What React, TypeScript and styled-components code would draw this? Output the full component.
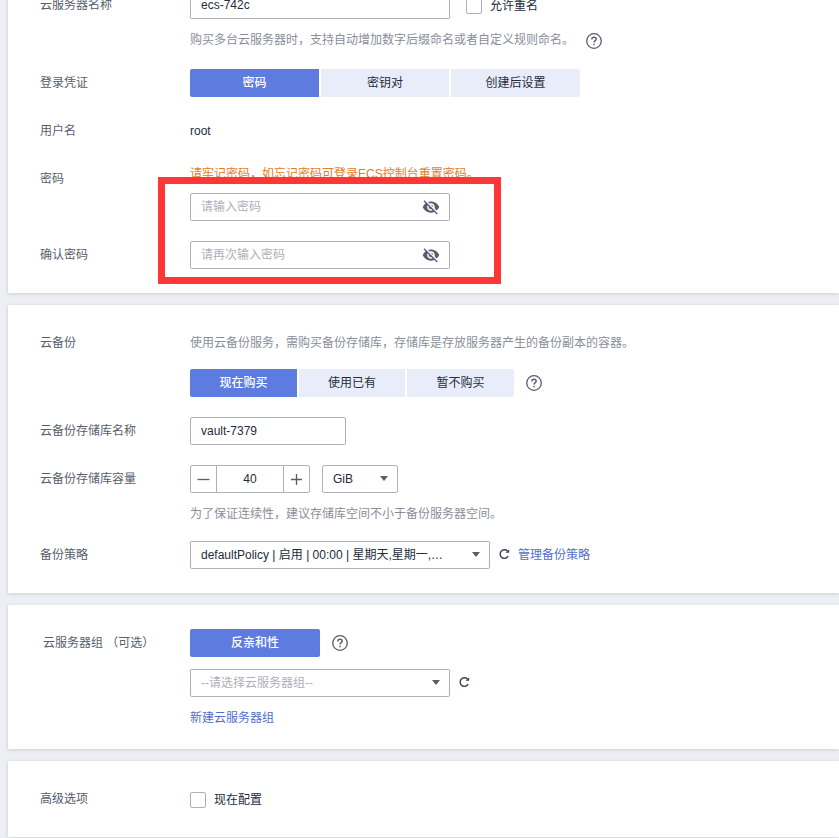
import React from 'react';
import styled, { createGlobalStyle } from 'styled-components';
import { MdVisibilityOff } from 'react-icons/md';

const color = {
  text: '#252b3a',
  label: '#575d6c',
  hint: '#8a8e99',
  line: '#adb0b8',
  primary: '#5e7ce0',
  link: '#526ecc',
  soft: '#e9edfa',
  warning: '#e37d29',
};

const GlobalStyle = createGlobalStyle`
  * { box-sizing: border-box; }
  body {
    margin: 0;
    background: #eeeff4;
    color: ${color.text};
    font: 12px/16px "Liberation Sans", "Noto Sans CJK SC", sans-serif;
  }
  input { font: inherit; color: inherit; }
`;

const Page = styled.main`
  position: relative;
  height: 838px;
  overflow: hidden;
  padding-left: 8px;
  display: flex;
  flex-direction: column;
  gap: 12px;
`;

const Card = styled.section<{ $scrolled?: boolean }>`
  flex: none;
  margin-top: ${p => (p.$scrolled ? '-33px' : '0')};
  padding: 24px 0 24px 32px;
  background: #fff;
  box-shadow: 0 1px 4px rgba(0, 0, 0, 0.14);
  display: flex;
  flex-direction: column;
  gap: 20px;
`;

const Row = styled.div`
  display: grid;
  grid-template-columns: 150px 1fr;
`;

const Label = styled.div<{ $indent?: number }>`
  padding-left: ${p => p.$indent ?? 0}px;
  line-height: 28px;
  color: ${color.label};
  white-space: pre;
`;

const Field = styled.div`
  min-width: 0;
`;

const Line = styled.div<{ $top?: number }>`
  display: flex;
  align-items: center;
  min-height: 28px;
  margin-top: ${p => p.$top ?? 0}px;
`;

const HelpLine = styled.div<{ $tall?: boolean }>`
  display: flex;
  align-items: ${p => (p.$tall ? 'flex-end' : 'center')};
  gap: 12px;
  height: ${p => (p.$tall ? 18 : 16)}px;
  margin: ${p => (p.$tall ? '12px 0 0' : '13px 0 -1px')};
  color: ${color.hint};
`;

const Hint = styled.span`
  color: ${color.hint};
`;

const Warning = styled.div`
  height: 18px;
  margin-bottom: 10px;
  line-height: 18px;
  color: ${color.warning};
`;

const Box = styled.div<{ $width: number }>`
  width: ${p => p.$width}px;
  height: 28px;
  padding: 0 10px;
  border: 1px solid ${color.line};
  border-radius: 2px;
  background: #fff;
  display: flex;
  align-items: center;
  justify-content: space-between;
`;

const Input = styled.input`
  flex: 1;
  min-width: 0;
  padding: 0;
  border: 0;
  outline: 0;
  background: transparent;
  &::placeholder { color: ${color.line}; opacity: 1; }
`;

const EyeOff = styled(MdVisibilityOff)`
  flex: none;
  width: 18px;
  height: 18px;
  margin-right: -1px;
  color: ${color.label};
`;

const Value = styled.span<{ $muted?: boolean }>`
  color: ${p => (p.$muted ? color.line : color.text)};
  white-space: nowrap;
`;

const Caret = styled.i`
  flex: none;
  margin: 0 -1px 1px 0;
  border: 4.5px solid transparent;
  border-top: 5.5px solid ${color.label};
  border-bottom: 0;
`;

const Segments = styled.div<{ $columns: string }>`
  display: grid;
  grid-template-columns: ${p => p.$columns};
  gap: 2px;
  height: 28px;
  border-radius: 2px;
  overflow: hidden;
`;

const Segment = styled.button<{ $active?: boolean }>`
  padding: 0;
  border: 0;
  font: inherit;
  font-weight: ${p => (p.$active ? 500 : 400)};
  color: ${p => (p.$active ? '#fff' : color.text)};
  background: ${p => (p.$active ? color.primary : color.soft)};
`;

const Stepper = styled.div`
  width: 120px;
  height: 28px;
  margin-right: 12px;
  border: 1px solid ${color.line};
  border-radius: 2px;
  display: grid;
  grid-template-columns: 25px 1fr 25px;
`;

const StepButton = styled.button`
  display: grid;
  place-items: center;
  padding: 0;
  border: 0;
  background: transparent;
  color: ${color.label};
`;

const StepValue = styled.div`
  border: solid ${color.line};
  border-width: 0 1px;
  line-height: 26px;
  text-align: center;
`;

const Check = styled.label<{ $left?: number }>`
  display: flex;
  align-items: center;
  gap: 8px;
  margin-left: ${p => p.$left ?? 0}px;
`;

const CheckText = styled.span`
  padding-top: 2px;
`;

const Tick = styled.input.attrs({ type: 'checkbox' })`
  appearance: none;
  width: 16px;
  height: 16px;
  margin: 2px 0 0;
  border: 1px solid ${color.line};
  border-radius: 2px;
  background: #fff;
`;

const Link = styled.a`
  color: ${color.link};
`;

const HelpSvg = styled.svg<{ $left?: number }>`
  flex: none;
  margin-left: ${p => p.$left ?? 0}px;
  color: ${color.label};
`;

const ReloadSvg = styled.svg`
  flex: none;
  margin: 0 8px 2px 9px;
  color: #3c4252;
`;

const Highlight = styled.div`
  position: absolute;
  left: 158px;
  top: 177px;
  width: 343px;
  height: 107px;
  border: 7px solid #fc3736;
  pointer-events: none;
`;

const HelpText = styled.span`
  line-height: 18px;
`;

const Help = ({ left }: { left?: number }) => (
  <HelpSvg $left={left} width="16" height="16" viewBox="0 0 16 16" fill="none" stroke="currentColor">
    <circle cx="8" cy="8" r="7.3" strokeWidth="1.3" />
    <path d="M5.8 6.4C5.8 5 6.8 4.3 8 4.3s2.2.7 2.2 1.9C10.2 7.6 8 7.7 8 9.6" strokeWidth="1.4" />
    <path d="M8 10.8v1.5" strokeWidth="1.5" />
  </HelpSvg>
);

const Reload = () => (
  <ReloadSvg width="11" height="12" viewBox="0 0 11 12" fill="none">
    <path d="M9.2 8.2A4.3 4.3 0 1 1 8.5 3" stroke="currentColor" strokeWidth="1.4" />
    <path d="M10.2 1.2v3.6H6.6z" fill="currentColor" />
  </ReloadSvg>
);

const Password = ({ placeholder }: { placeholder: string }) => (
  <Box $width={260}>
    <Input type="password" placeholder={placeholder} />
    <EyeOff />
  </Box>
);

const Select = ({ width, value, muted }: { width: number; value: string; muted?: boolean }) => (
  <Box $width={width}>
    <Value $muted={muted}>{value}</Value>
    <Caret />
  </Box>
);

const Choices = ({ items, columns }: { items: string[]; columns: string }) => (
  <Segments $columns={columns}>
    {items.map((item, i) => (
      <Segment key={item} $active={i === 0}>{item}</Segment>
    ))}
  </Segments>
);

export default function App() {
  return (
    <>
      <GlobalStyle />
      <Page>
        <Card $scrolled>
          <Row>
            <Label>云服务器名称</Label>
            <Field>
              <Line>
                <Box $width={260}><Input defaultValue="ecs-742c" /></Box>
                <Check $left={16}><Tick /><CheckText>允许重名</CheckText></Check>
              </Line>
              <HelpLine $tall>
                <HelpText>购买多台云服务器时，支持自动增加数字后缀命名或者自定义规则命名。</HelpText>
                <Help />
              </HelpLine>
            </Field>
          </Row>
          <Row>
            <Label>登录凭证</Label>
            <Line><Choices items={['密码', '密钥对', '创建后设置']} columns="129px 128px 129px" /></Line>
          </Row>
          <Row>
            <Label>用户名</Label>
            <Line>root</Line>
          </Row>
          <Row>
            <Label>密码</Label>
            <Field>
              <Warning>请牢记密码，如忘记密码可登录ECS控制台重置密码。</Warning>
              <Password placeholder="请输入密码" />
            </Field>
          </Row>
          <Row>
            <Label>确认密码</Label>
            <Password placeholder="请再次输入密码" />
          </Row>
        </Card>

        <Card>
          <Row>
            <Label>云备份</Label>
            <Field>
              <Line><Hint>使用云备份服务，需购买备份存储库，存储库是存放服务器产生的备份副本的容器。</Hint></Line>
              <Line $top={12}>
                <Choices items={['现在购买', '使用已有', '暂不购买']} columns="107px 106px 107px" />
                <Help left={12} />
              </Line>
            </Field>
          </Row>
          <Row>
            <Label>云备份存储库名称</Label>
            <Box $width={156}><Input defaultValue="vault-7379" /></Box>
          </Row>
          <Row>
            <Label>云备份存储库容量</Label>
            <Field>
              <Line>
                <Stepper>
                  <StepButton aria-label="-">
                    <svg width="13" height="13" stroke="currentColor" strokeWidth="1.3"><path d="M0.5 6.5h12" /></svg>
                  </StepButton>
                  <StepValue>40</StepValue>
                  <StepButton aria-label="+">
                    <svg width="13" height="13" stroke="currentColor" strokeWidth="1.3"><path d="M1 6.5h11M6.5 1v11" /></svg>
                  </StepButton>
                </Stepper>
                <Select width={76} value="GiB" />
              </Line>
              <HelpLine>为了保证连续性，建议存储库空间不小于备份服务器空间。</HelpLine>
            </Field>
          </Row>
          <Row>
            <Label>备份策略</Label>
            <Line>
              <Select width={300} value="defaultPolicy | 启用 | 00:00 | 星期天,星期一,…" />
              <Reload />
              <Link>管理备份策略</Link>
            </Line>
          </Row>
        </Card>

        <Card>
          <Row>
            <Label $indent={3}>云服务器组 （可选）</Label>
            <Field>
              <Line>
                <Choices items={['反亲和性']} columns="130px" />
                <Help left={12} />
              </Line>
              <Line $top={12}>
                <Select width={260} value="--请选择云服务器组--" muted />
                <Reload />
              </Line>
              <HelpLine><Link>新建云服务器组</Link></HelpLine>
            </Field>
          </Row>
        </Card>

        <Card>
          <Row>
            <Label>高级选项</Label>
            <Line><Check><Tick /><CheckText>现在配置</CheckText></Check></Line>
          </Row>
        </Card>
        <Highlight />
      </Page>
    </>
  );
}
